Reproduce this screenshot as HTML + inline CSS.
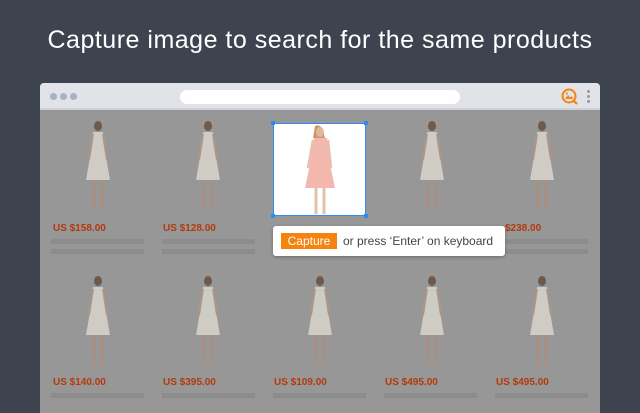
<!DOCTYPE html>
<html><head><meta charset="utf-8"><style>
*{margin:0;padding:0;box-sizing:border-box}
body{width:640px;height:400px;background:#3d4450;position:relative;overflow:hidden;font-family:"Liberation Sans",Arial,sans-serif}
h1{position:absolute;top:26px;left:0;width:640px;text-align:center;color:#fff;font-size:25px;font-weight:normal;letter-spacing:0.5px}
.win{position:absolute;left:40px;top:83px;width:560px;height:330px;background:#979797;border-radius:4px 4px 0 0;overflow:hidden}
.bar{height:27px;background:#e1e3e8;border-bottom:2px solid #cfd2d8;position:relative}
.dot{position:absolute;top:10px;width:7px;height:7px;border-radius:50%;background:#a9b1c6}
.url{position:absolute;left:140px;top:7px;width:280px;height:14px;background:#fff;border-radius:7px}
.price{position:absolute;color:#b33a0c;font-size:10px;font-weight:bold}
.ln{position:absolute;height:5px;background:#8c8c8c;width:93px}
.sel{position:absolute;left:273px;top:123px;width:93px;height:93px;background:#fff;border:1px solid #2d8cf0}
.h{position:absolute;width:4px;height:4px;background:#2d8cf0}
.tip{position:absolute;left:273px;top:226px;width:232px;height:30px;background:#fff;border-radius:3px;font-size:12px;color:#444;box-shadow:0 1px 3px rgba(0,0,0,.3)}
.cap{position:absolute;left:8px;top:7px;width:56px;height:16px;background:#f7830f;color:#fff;font-size:12px;text-align:center;line-height:16px}
</style></head><body>
<h1>Capture image to search for the same products</h1>
<div class="win">
<div class="bar"><div class="dot" style="left:10px"></div><div class="dot" style="left:20px"></div><div class="dot" style="left:30px"></div><div class="url"></div>
<svg style="position:absolute;left:520px;top:4px" width="20" height="20" viewBox="0 0 20 20"><circle cx="9" cy="9" r="6.5" fill="none" stroke="#f7830f" stroke-width="2"/><path d="M5 12 L8 8 L10 10.5 L12 9 L13 12Z" fill="#f7830f"/><circle cx="7" cy="6.5" r="1" fill="#f7830f"/><path d="M13.5 13.5 L17 17" stroke="#f7830f" stroke-width="2.2"/></svg>
<div style="position:absolute;left:547px;top:7px;width:3px;height:3px;border-radius:50%;background:#999;box-shadow:0 5px 0 #999,0 10px 0 #999"></div>
</div>
</div>
<svg width="640" height="400" style="position:absolute;left:0;top:0">
<defs><g id="d"><ellipse cx="0" cy="4" rx="4" ry="5" fill="#6e5a4c"/><path d="M-5 10 L5 10 L8 35 L12 58 L-12 58 L-8 35Z" fill="#cfccc6"/><path d="M-4 58 L-4 88 M4 58 L4 88" stroke="#a88f80" stroke-width="3"/><path d="M-5 12 L-9 38 M5 12 L9 38" stroke="#b09585" stroke-width="2"/></g></defs>
<use href="#d" x="98" y="122"/><use href="#d" x="208" y="122"/><use href="#d" x="432" y="122"/><use href="#d" x="542" y="122"/>
<use href="#d" x="98" y="277"/><use href="#d" x="208" y="277"/><use href="#d" x="320" y="277"/><use href="#d" x="432" y="277"/><use href="#d" x="542" y="277"/>
</svg>
<div class="price" style="left:53px;top:223px">US $158.00</div><div class="price" style="left:163px;top:223px">US $128.00</div><div class="price" style="left:505px;top:223px">$238.00</div>
<div class="price" style="left:53px;top:377px">US $140.00</div><div class="price" style="left:163px;top:377px">US $395.00</div><div class="price" style="left:274px;top:377px">US $109.00</div><div class="price" style="left:385px;top:377px">US $495.00</div><div class="price" style="left:496px;top:377px">US $495.00</div>
<div class="ln" style="left:51px;top:239px"></div><div class="ln" style="left:51px;top:249px"></div><div class="ln" style="left:162px;top:239px"></div><div class="ln" style="left:162px;top:249px"></div>
<div class="ln" style="left:495px;top:239px"></div><div class="ln" style="left:495px;top:249px"></div><div class="ln" style="left:384px;top:239px"></div>
<div class="ln" style="left:51px;top:393px"></div><div class="ln" style="left:162px;top:393px"></div><div class="ln" style="left:273px;top:393px"></div><div class="ln" style="left:384px;top:393px"></div><div class="ln" style="left:495px;top:393px"></div>
<div class="sel"><svg width="93" height="93" style="position:absolute;left:15px;top:0"><path d="M26 2 Q30 0 33 4 L36 14 L24 14Z" fill="#c99a6a"/><ellipse cx="31" cy="8" rx="4" ry="5" fill="#e3b79a"/><path d="M25 14 L38 14 L41 40 L46 64 L16 64 L21 40Z" fill="#f2b8ae"/><path d="M27 64 L27 90 M35 64 L35 90" stroke="#e6c0a8" stroke-width="3"/><path d="M24 16 L19 44 M39 16 L42 44" stroke="#e6c0a8" stroke-width="2.5"/></svg>
<div class="h" style="left:-3px;top:-3px"></div><div class="h" style="right:-3px;top:-3px"></div><div class="h" style="left:-3px;bottom:-3px"></div><div class="h" style="right:-3px;bottom:-3px"></div></div>
<div class="tip"><div class="cap">Capture</div><span style="position:absolute;left:70px;top:8px">or press ‘Enter’ on keyboard</span></div>
</body></html>
